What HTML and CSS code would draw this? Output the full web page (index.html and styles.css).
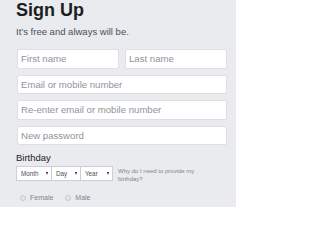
FILE: index.html
```html
<!DOCTYPE html>
<html lang="en">
<head>
<meta charset="utf-8">
<title>Sign Up</title>
<link rel="stylesheet" href="styles.css">
</head>
<body>
<div class="signup">
  <h1 class="title">Sign Up</h1>
  <p class="subtitle">It’s free and always will be.</p>
  <div class="fields">
    <div class="row">
      <input class="field" type="text" placeholder="First name">
      <input class="field" type="text" placeholder="Last name">
    </div>
    <input class="field" type="text" placeholder="Email or mobile number">
    <input class="field" type="text" placeholder="Re-enter email or mobile number">
    <input class="field" type="password" placeholder="New password">
  </div>
  <div class="label">Birthday</div>
  <div class="birthday">
    <div class="selects">
      <div class="sel sel-month"><span>Month</span><i class="arrow"></i></div>
      <div class="sel sel-day"><span>Day</span><i class="arrow"></i></div>
      <div class="sel sel-year"><span>Year</span><i class="arrow"></i></div>
    </div>
    <a class="why">Why do I need to provide my birthday?</a>
  </div>
  <div class="gender">
    <label class="radio"><span class="dot"></span>Female</label>
    <label class="radio"><span class="dot"></span>Male</label>
  </div>
</div>
</body>
</html>
```
FILE: styles.css
```css
html, body {
  margin: 0;
  padding: 0;
  background: #ffffff;
}
body {
  font-family: "Liberation Sans", Arial, sans-serif;
  color: #1c1e21;
}
.signup {
  background: #e9ebee;
  width: 236px;
  height: 207px;
  box-sizing: border-box;
  padding: 0 9px 0 17px;
}
.title {
  margin: 0 0 0 -1px;
  font-size: 18px;
  line-height: 21px;
  font-weight: bold;
  color: #1c1e21;
}
.subtitle {
  margin: 5px 0 0 -1px;
  font-size: 9.5px;
  line-height: 12px;
  color: #4b4f56;
}
.fields {
  margin-top: 11px;
  display: flex;
  flex-direction: column;
  gap: 6px;
}
.row {
  display: flex;
  gap: 6px;
}
.row .field {
  flex: 1;
  min-width: 0;
}
.field {
  display: block;
  box-sizing: border-box;
  height: 19.5px;
  width: 100%;
  margin: 0;
  padding: 0 3px;
  border: 1px solid #dddfe2;
  border-radius: 2px;
  background: #ffffff;
  font-family: "Liberation Sans", Arial, sans-serif;
  font-size: 9.6px;
  color: #1c1e21;
  outline: none;
}
.field::placeholder {
  color: #90949c;
  opacity: 1;
}
.label {
  margin: 6.7px 0 0 -1px;
  font-size: 9.5px;
  line-height: 12px;
  color: #1c1e21;
}
.birthday {
  margin: 2.3px 0 0 -1px;
  display: flex;
  align-items: flex-start;
  gap: 5px;
}
.selects {
  display: flex;
}
.sel {
  box-sizing: border-box;
  height: 15px;
  display: flex;
  align-items: center;
  justify-content: space-between;
  padding: 0 3px 0 4px;
  background: #ffffff;
  border: 1px solid #ccd0d5;
  font-size: 6.3px;
  color: #4b4f56;
}
.sel + .sel {
  border-left: none;
}
.sel-month { width: 36px; }
.sel-day { width: 29px; }
.sel-year { width: 32px; }
.arrow {
  width: 0;
  height: 0;
  border-left: 1.8px solid transparent;
  border-right: 1.8px solid transparent;
  border-top: 3px solid #1c1e21;
}
.why {
  margin-top: 1px;
  width: 80px;
  font-size: 6px;
  line-height: 8.5px;
  color: #7f858d;
}
.gender {
  margin: 10px 0 0 3px;
  display: flex;
  gap: 12px;
}
.radio {
  display: flex;
  align-items: center;
  gap: 4px;
  font-size: 7px;
  line-height: 8px;
  color: #7f8389;
}
.dot {
  box-sizing: border-box;
  width: 6px;
  height: 6px;
  border-radius: 50%;
  border: 1px solid #c6c9ce;
  background: #e4e6ea;
}
```
